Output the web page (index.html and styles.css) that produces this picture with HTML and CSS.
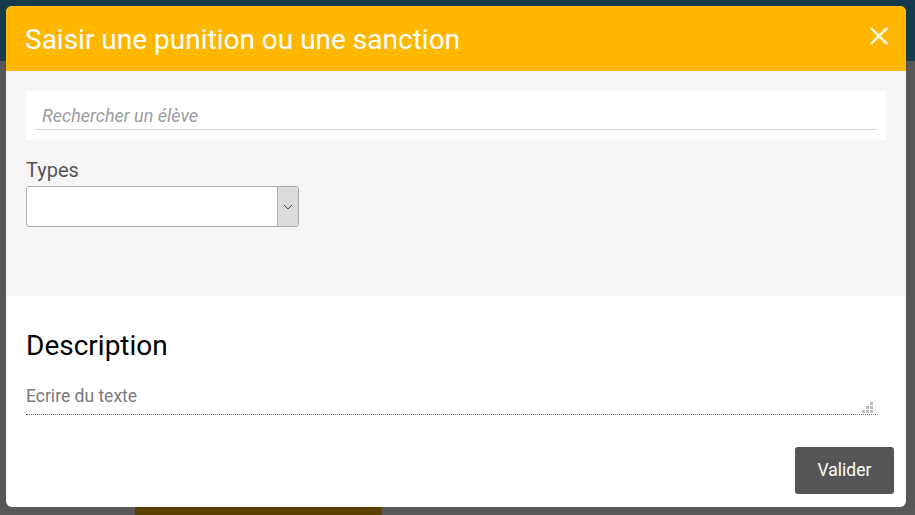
FILE: index.html
```html
<!DOCTYPE html>
<html lang="fr">
<head>
<meta charset="utf-8">
<title>Saisir une punition ou une sanction</title>
<link rel="stylesheet" href="styles.css">
</head>
<body>
<div class="backdrop">
  <div class="backdrop-top"></div>
  <div class="backdrop-main"></div>
  <div class="backdrop-bottom"><div class="backdrop-tab"></div></div>
</div>

<div class="modal" role="dialog" aria-labelledby="modal-title">
  <header class="modal-header">
    <h1 id="modal-title" class="modal-title">Saisir une punition ou une sanction</h1>
    <button class="close-btn" type="button" aria-label="Fermer">
      <svg width="18" height="18" viewBox="0 0 18 18"><path d="M1 1 L17 17 M17 1 L1 17" stroke="#fff" stroke-width="2.4" fill="none"/></svg>
    </button>
  </header>

  <section class="modal-top">
    <div class="search-box">
      <input class="search-input" type="text" placeholder="Rechercher un élève">
    </div>
    <label class="field-label">Types</label>
    <div class="select">
      <div class="select-value"></div>
      <div class="select-arrow">
        <svg width="10" height="6" viewBox="0 0 10 6"><path d="M1 1 L5 5 L9 1" stroke="#444" stroke-width="1" fill="none"/></svg>
      </div>
    </div>
  </section>

  <section class="modal-body">
    <h2 class="section-title">Description</h2>
    <div class="textarea-wrap">
      <textarea class="description" placeholder="Ecrire du texte"></textarea>
      <svg class="grip" width="11" height="11" viewBox="0 0 11 11">
        <rect x="8" y="0" width="3" height="3" fill="#bdbdbd"/>
        <rect x="4" y="4" width="3" height="3" fill="#bdbdbd"/>
        <rect x="8" y="4" width="3" height="3" fill="#bdbdbd"/>
        <rect x="0" y="8" width="3" height="3" fill="#bdbdbd"/>
        <rect x="4" y="8" width="3" height="3" fill="#bdbdbd"/>
        <rect x="8" y="8" width="3" height="3" fill="#bdbdbd"/>
      </svg>
    </div>
    <div class="actions">
      <button class="btn-primary" type="button">Valider</button>
    </div>
  </section>
</div>
</body>
</html>
```

FILE: styles.css
```css
* { box-sizing: border-box; }

html, body {
  margin: 0;
  padding: 0;
  height: 100%;
}

body {
  font-family: Roboto, "Liberation Sans", Arial, sans-serif;
  overflow: hidden;
  background: #575757;
}

.backdrop {
  display: flex;
  flex-direction: column;
  height: 515px;
}

.backdrop-top {
  height: 61px;
  background: #143a4b;
}

.backdrop-main {
  flex: 1;
  background: #575757;
}

.backdrop-bottom {
  height: 8px;
  background: #595959;
  padding-left: 135px;
}

.backdrop-tab {
  width: 247px;
  height: 8px;
  background: #5a4100;
}

.modal {
  position: absolute;
  top: 6px;
  left: 6px;
  width: 900px;
  height: 501px;
  background: #fff;
  border-radius: 6px;
  overflow: hidden;
  display: flex;
  flex-direction: column;
}

.modal-header {
  height: 65px;
  flex: none;
  background: #ffb700;
  display: flex;
  align-items: center;
  justify-content: space-between;
  padding: 0 19px 0 19px;
}

.modal-title {
  margin: 0;
  font-size: 28px;
  font-weight: 400;
  color: #fff;
  line-height: 33px;
  padding-top: 2px;
}

.close-btn {
  border: 0;
  background: none;
  padding: 0;
  width: 18px;
  height: 18px;
  display: flex;
  margin-right: -1px;
  margin-top: -6px;
  cursor: pointer;
}

.modal-top {
  height: 225px;
  flex: none;
  background: #f6f6f6;
  padding: 20px 20px 0 20px;
  display: flex;
  flex-direction: column;
  align-items: flex-start;
}

.search-box {
  width: 860px;
  height: 49px;
  background: #fff;
  padding: 0 9px;
}

.search-input {
  display: block;
  width: 100%;
  height: 39px;
  border: 0;
  border-bottom: 1px solid #d4d4dc;
  padding: 10px 0 0 7px;
  font-family: inherit;
  font-size: 18px;
  font-style: italic;
  color: #333;
  background: transparent;
  outline: none;
}

.search-input::placeholder {
  color: #9b9ca3;
  font-style: italic;
}

.field-label {
  margin-top: 19px;
  font-size: 20px;
  line-height: 23px;
  color: #555;
}

.select {
  margin-top: 4px;
  width: 273px;
  height: 41px;
  border: 1px solid #a9a9b0;
  border-radius: 3px;
  background: #fff;
  display: flex;
  overflow: hidden;
}

.select-value { flex: 1; }

.select-arrow {
  width: 21px;
  background: #dcdcdc;
  border-left: 1px solid #a9a9b0;
  display: flex;
  align-items: center;
  justify-content: center;
}

.modal-body {
  flex: 1;
  padding: 0 20px;
  display: flex;
  flex-direction: column;
}

.section-title {
  margin: 33px 0 0 0;
  font-size: 28px;
  font-weight: 400;
  line-height: 33px;
  color: #000;
}

.textarea-wrap {
  position: relative;
  width: 850px;
  margin-top: 20px;
}

.description {
  display: block;
  width: 100%;
  height: 33px;
  border: 0;
  border-bottom: 1px dotted #666;
  padding: 4px 0 0 0;
  font-family: inherit;
  font-size: 17.5px;
  line-height: 21px;
  color: #333;
  resize: none;
  outline: none;
  background: transparent;
  overflow: hidden;
}

.description::placeholder {
  color: #7a7a7a;
}

.grip {
  position: absolute;
  right: 3px;
  bottom: 2px;
}

.actions {
  display: flex;
  justify-content: flex-end;
  margin-top: 32px;
  margin-right: -8px;
}

.btn-primary {
  width: 99px;
  height: 47px;
  border: 0;
  border-radius: 3px;
  background: #555;
  color: #fff;
  font-family: inherit;
  font-size: 17.5px;
  padding: 0 0 2px 0;
  cursor: pointer;
}
```
